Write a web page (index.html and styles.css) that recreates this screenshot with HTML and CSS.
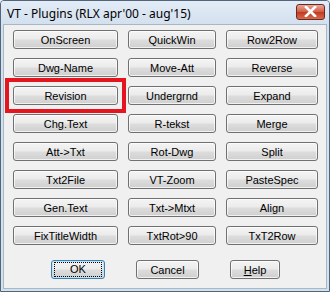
FILE: index.html
```html
<!DOCTYPE html>
<html lang="en">
<head>
    <meta charset="UTF-8">
    <title>VT - Plugins</title>
    <link rel="stylesheet" href="styles.css">
</head>
<body>
    <div class="window">
        <div class="titlebar">
            <span class="title">VT - Plugins (RLX apr'00 - aug'15)</span>
            <span class="close">
                <svg width="13" height="11" viewBox="0 0 13 11">
                    <path d="M2 1 L11 10 M11 1 L2 10" stroke="#fff" stroke-width="2.6" stroke-linecap="square"/>
                </svg>
            </span>
        </div>
        <div class="client">
            <div class="grid">
                <button class="btn">OnScreen</button>
                <button class="btn">QuickWin</button>
                <button class="btn">Row2Row</button>

                <button class="btn">Dwg-Name</button>
                <button class="btn">Move-Att</button>
                <button class="btn">Reverse</button>

                <button class="btn marked">Revision</button>
                <button class="btn">Undergrnd</button>
                <button class="btn">Expand</button>

                <button class="btn">Chg.Text</button>
                <button class="btn">R-tekst</button>
                <button class="btn">Merge</button>

                <button class="btn">Att-&gt;Txt</button>
                <button class="btn">Rot-Dwg</button>
                <button class="btn">Split</button>

                <button class="btn">Txt2File</button>
                <button class="btn">VT-Zoom</button>
                <button class="btn">PasteSpec</button>

                <button class="btn">Gen.Text</button>
                <button class="btn">Txt-&gt;Mtxt</button>
                <button class="btn">Align</button>

                <button class="btn">FixTitleWidth</button>
                <button class="btn">TxtRot&gt;90</button>
                <button class="btn">TxT2Row</button>
            </div>
            <div class="actions">
                <button class="btn default ok"><span class="focus">OK</span></button>
                <button class="btn cancel">Cancel</button>
                <button class="btn help"><u>H</u>elp</button>
            </div>
        </div>
    </div>
</body>
</html>
```

FILE: styles.css
```css
html, body {
    margin: 0;
    padding: 0;
    background: #f0f0f0;
}
.window {
    width: 330px;
    height: 292px;
    box-sizing: border-box;
    border: 1px solid #53657a;
    border-radius: 4px 4px 0 0;
    background: #d3e0ee;
    display: flex;
    flex-direction: column;
    overflow: hidden;
}
.titlebar {
    height: 23px;
    display: flex;
    align-items: center;
    justify-content: space-between;
    padding: 0 4px 0 6px;
    background: linear-gradient(#e3ecf7, #d3e0ee);
}
.title {
    font-family: "Noto Sans", sans-serif;
    font-size: 12px;
    color: #000;
    margin-top: 1px;
}
.close {
    width: 29px;
    height: 16px;
    margin-top: -2px;
    box-sizing: border-box;
    border: 1px solid #6a2a24;
    border-radius: 3px;
    background: linear-gradient(#e9a99a, #d05a43 50%, #c2391f 51%, #d86a4c);
    display: flex;
    align-items: center;
    justify-content: center;
}
.client {
    flex: 1;
    margin: 0 2px 2px 2px;
    background: #f0f0f0;
    border: 1px solid #a8b6c6;
    padding: 5px 0 0 9px;
}
.grid {
    display: grid;
    grid-template-columns: 105px 88px 92px;
    grid-auto-rows: 19px;
    column-gap: 10px;
    row-gap: 9px;
}
.btn {
    font-family: "Liberation Sans", Arial, sans-serif;
    font-size: 11px;
    color: #000;
    height: 19px;
    padding: 0;
    box-sizing: border-box;
    border: 1px solid #707070;
    border-radius: 3px;
    background: linear-gradient(#f4f4f4, #ebebeb 48%, #dddddd 52%, #cfcfcf);
    box-shadow: inset 0 0 0 1px rgba(255, 255, 255, 0.7);
}
.marked {
    position: relative;
}
.marked::after {
    content: "";
    position: absolute;
    left: -9px;
    top: -9px;
    right: -9px;
    bottom: -9px;
    border: 4px solid #e4151f;
}
.actions {
    display: flex;
    margin-top: 15px;
    padding-left: 38px;
}
.ok {
    width: 54px;
}
.cancel {
    width: 63px;
    margin-left: 31px;
}
.help {
    width: 50px;
    margin-left: 31px;
}
.default {
    border-color: #3c7fb1;
    box-shadow: inset 0 0 0 1px #bfe3f7;
}
.focus {
    display: block;
    margin: 0 2px;
    line-height: 13px;
    border: 1px dotted #000;
}
```
